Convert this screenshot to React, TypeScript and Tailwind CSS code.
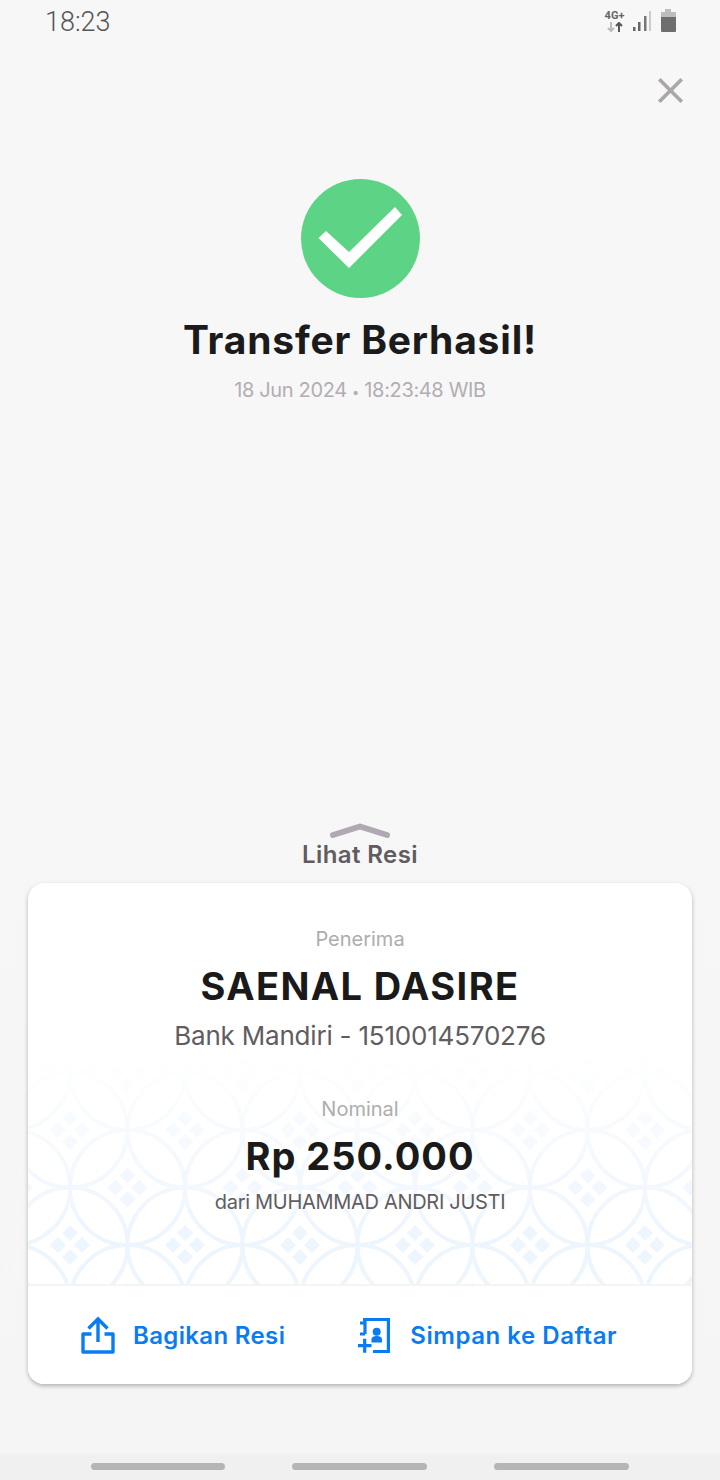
import { X } from "lucide-react";

function BatikPattern() {
  return (
    <svg className="absolute left-0 top-[167px] h-[234px] w-full" xmlns="http://www.w3.org/2000/svg">
      <defs>
        <pattern id="kawung" x="42" y="-35" width="115" height="115" patternUnits="userSpaceOnUse">
          <g fill="none" stroke="#edf5fd" strokeWidth="4">
            <circle cx="0" cy="0" r="57.5" />
            <circle cx="115" cy="0" r="57.5" />
            <circle cx="0" cy="115" r="57.5" />
            <circle cx="115" cy="115" r="57.5" />
            <circle cx="57.5" cy="57.5" r="57.5" />
          </g>
          <g fill="#edf5fd">
            <path d="M0 -20l8 8-8 8-8-8zM0 4l8 8-8 8-8-8zM-12 -8l8 8-8 8-8-8zM12 -8l8 8-8 8-8-8z" />
            <path d="M115 -20l8 8-8 8-8-8zM115 4l8 8-8 8-8-8zM103 -8l8 8-8 8-8-8zM127 -8l8 8-8 8-8-8z" />
            <path d="M0 95l8 8-8 8-8-8zM0 119l8 8-8 8-8-8zM-12 107l8 8-8 8-8-8zM12 107l8 8-8 8-8-8z" />
            <path d="M115 95l8 8-8 8-8-8zM115 119l8 8-8 8-8-8zM103 107l8 8-8 8-8-8zM127 107l8 8-8 8-8-8z" />
            <path d="M57.5 37.5l8 8-8 8-8-8zM57.5 61.5l8 8-8 8-8-8zM45.5 49.5l8 8-8 8-8-8zM69.5 49.5l8 8-8 8-8-8z" />
          </g>
        </pattern>
        <linearGradient id="fade" x1="0" y1="0" x2="0" y2="1">
          <stop offset="0" stopColor="#fff" stopOpacity="0" />
          <stop offset="0.8" stopColor="#fff" stopOpacity="1" />
        </linearGradient>
        <mask id="fadeMask">
          <rect width="100%" height="100%" fill="url(#fade)" />
        </mask>
      </defs>
      <rect width="100%" height="100%" fill="url(#kawung)" mask="url(#fadeMask)" />
    </svg>
  );
}

function ShareIcon() {
  return (
    <svg width="34" height="38" viewBox="0 0 34 38" fill="none" stroke="#0a7cf2" strokeWidth="3.4">
      <path d="M10.5 18H2v18h30V18h-8.5" strokeLinejoin="round" />
      <path d="M17 26V3M7.5 12.5L17 3l9.5 9.5" />
    </svg>
  );
}

function ContactIcon() {
  return (
    <svg width="32" height="38" viewBox="0 0 32 38" fill="none" stroke="#0a7cf2" strokeWidth="3.2">
      <path d="M5 3.5h25.4v32H15" />
      <path d="M2 7H7V3.5M7 7v11M2 18h5" />
      <path d="M0 29.7h13.5M6.7 22.7v14" />
      <circle cx="18.7" cy="15.7" r="4" fill="#0a7cf2" stroke="none" />
      <path d="M13.5 26.5v-3c0-2.5 2.5-3.5 5.2-3.5s5.3 1 5.3 3.5v3z" fill="#0a7cf2" stroke="none" />
    </svg>
  );
}

function StatusIcons() {
  return (
    <div className="flex items-start">
      <div className="flex w-[21px] flex-col items-center">
        <span className="mt-[1px] text-[11px] font-bold leading-[11px] text-[#666] [font-family:Roboto,sans-serif]">4G+</span>
        <svg className="mt-[1px]" width="18" height="10" viewBox="0 0 18 10" fill="none" strokeWidth="2">
          <path d="M5 0v9M2 6l3 3 3-3" stroke="#bbb" />
          <path d="M13 10V1M10 4l3-3 3 3" stroke="#555" />
        </svg>
      </div>
      <svg className="ml-[8px] mt-[2px]" width="20" height="20" viewBox="0 0 20 20">
        <rect x="0" y="16" width="2.5" height="4" fill="#666" />
        <rect x="5" y="11" width="2.5" height="9" fill="#666" />
        <rect x="11" y="5" width="2.5" height="15" fill="#777" />
        <rect x="16" y="0" width="2" height="20" fill="#ccc" />
      </svg>
      <svg className="ml-[8px]" width="15" height="23" viewBox="0 0 15 23">
        <path d="M4 0h6v3h5v6H0V3h4z" fill="#bdbdbd" />
        <path d="M0 8h15v14a1 1 0 0 1-1 1H1a1 1 0 0 1-1-1z" fill="#6e6e6e" />
      </svg>
    </div>
  );
}

export default function App() {
  return (
    <div className="flex h-[1480px] w-[720px] flex-col overflow-hidden bg-linear-to-b from-[#f7f7f7] via-[#f7f7f7] to-[#f5f5f5] [font-family:Inter,sans-serif]">
      {/* Status bar */}
      <div className="flex h-[44px] items-center justify-between pl-[45px] pr-[44px]">
        <span className="mt-[1px] text-[27px] font-light leading-none text-[#555] [font-family:Roboto,sans-serif]">18:23</span>
        <div className="-mt-[3px]">
          <StatusIcons />
        </div>
      </div>

      <div className="flex justify-end pr-[27px] pt-[24px]">
        <X size={45} strokeWidth={2} strokeLinecap="butt" className="text-[#aaa6ab]" />
      </div>

      {/* Result */}
      <div className="mt-[66px] flex flex-col items-center">
        <div className="h-[119px] w-[119px] rounded-full bg-[#5dd386]">
          <svg width="119" height="119" viewBox="0 0 119 119">
            <path d="M17.5 59L48 89l53-53-7-8-46 45-23-21z" fill="#fff" />
          </svg>
        </div>
        <h1 className="mt-[18px] text-[39px] font-bold leading-[48px] tracking-[0.8px] text-[#1b1b1b]">Transfer Berhasil!</h1>
        <p className="mt-[14px] text-[20px] leading-[24px] tracking-[-0.35px] text-[#b2adb3]">
          18 Jun 2024 <span className="text-[13px]">•</span> 18:23:48 WIB
        </p>
      </div>

      {/* Receipt */}
      <div className="mt-auto flex flex-col items-center">
        <svg width="64" height="16" viewBox="0 0 64 16" fill="none">
          <path d="M5 12L32 3.5 59 12" stroke="#b0a9b1" strokeWidth="6" strokeLinecap="round" strokeLinejoin="round" />
        </svg>
        <span className="mt-[2px] text-[24px] font-semibold leading-[28px] tracking-[0.4px] text-[#605c60]">Lihat Resi</span>
      </div>

      <div className="relative mx-[28px] mt-[14px] overflow-hidden rounded-2xl bg-white shadow-[0_2px_4px_rgba(0,0,0,0.28)]">
        <BatikPattern />
        <div className="relative flex h-[401px] flex-col items-center pt-[44px]">
          <p className="text-[20px] leading-[24px] text-[#adadad]">Penerima</p>
          <p className="mt-[13px] text-[38px] font-bold leading-[44px] tracking-[1.4px] text-[#1a1a1a]">SAENAL DASIRE</p>
          <p className="mt-[12px] text-[26px] leading-[32px] tracking-[-0.2px] text-[#605c60]">Bank Mandiri - 1510014570276</p>
          <p className="mt-[45px] text-[20px] leading-[24px] text-[#adadad]">Nominal</p>
          <p className="mt-[12px] text-[38px] font-bold leading-[46px] tracking-[1px] text-[#1a1a1a]">Rp 250.000</p>
          <p className="mt-[10px] text-[20px] leading-[26px] tracking-[-0.3px] text-[#605c60]">dari MUHAMMAD ANDRI JUSTI</p>
        </div>
        <div className="relative flex h-[100px] items-center border-t-2 border-[#f4f4f4] bg-white pl-[53px] text-[24px] font-semibold text-[#0a7cf2]">
          <ShareIcon />
          <span className="ml-[18px] mt-[2px] tracking-[0.35px]">Bagikan Resi</span>
          <span className="ml-[73px] flex items-center">
            <ContactIcon />
            <span className="ml-[20px] mt-[2px] tracking-[0.55px]">Simpan ke Daftar</span>
          </span>
        </div>
      </div>

      {/* Navigation bar */}
      <div className="mt-[70px] flex h-[26px] items-center bg-[#f0f0f0] pb-[1px] pl-[91px]">
        <div className="h-[7px] w-[134px] rounded-full bg-[#b5b5b5]" />
        <div className="ml-[67px] h-[7px] w-[135px] rounded-full bg-[#b5b5b5]" />
        <div className="ml-[67px] h-[7px] w-[135px] rounded-full bg-[#b5b5b5]" />
      </div>
    </div>
  );
}
